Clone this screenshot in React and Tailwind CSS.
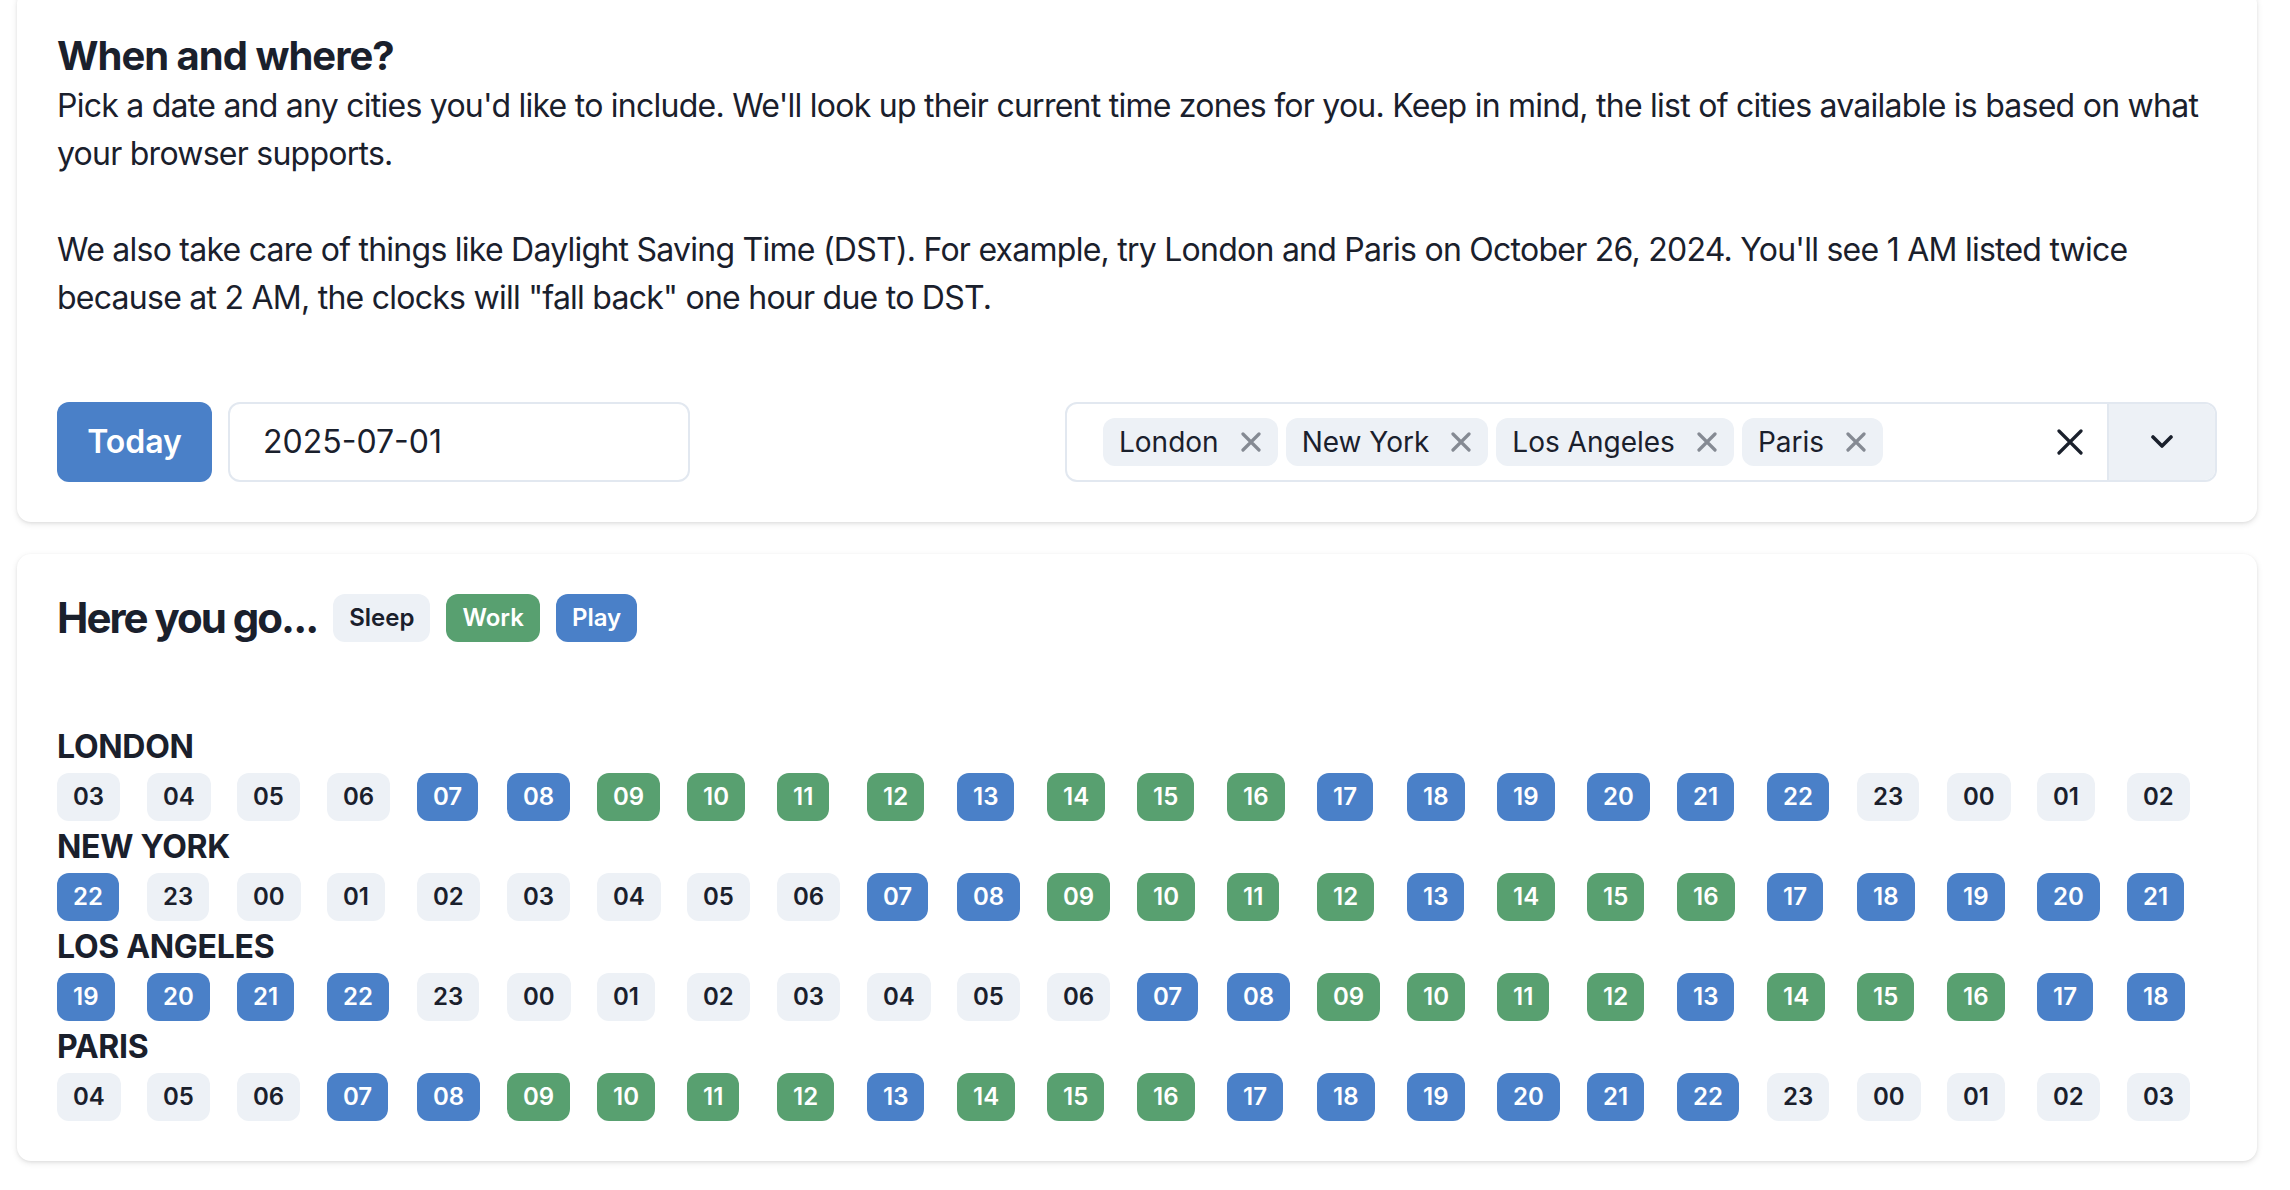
import React from 'react';

const cities = [
  { name: 'London', start: 3 },
  { name: 'New York', start: 22 },
  { name: 'Los Angeles', start: 19 },
  { name: 'Paris', start: 4 },
];

const kindOf = (h) => {
  if (h >= 23 || h <= 6) return 'sleep';
  if ((h >= 9 && h <= 12) || (h >= 14 && h <= 16)) return 'work';
  return 'play';
};

const badgeClass = {
  sleep: 'bg-[#edf1f6] text-[#1a202c]',
  work: 'bg-[#58a070] text-white',
  play: 'bg-[#4a80c8] text-white',
};

const TagX = () => (
  <svg width="20" height="20" viewBox="0 0 20 20" className="shrink-0">
    <path d="M2 2 L18 18 M18 2 L2 18" stroke="#858a93" strokeWidth="3.2" strokeLinecap="round" fill="none" />
  </svg>
);

const App = () => {
  return (
    <div className="min-h-screen bg-white pl-[17px] pr-[33px] pb-[32px] font-[Inter,'Noto_Sans',sans-serif] text-[#1a202c]">
      <div className="-mt-[10px] rounded-[14px] bg-white p-[40px] shadow-[0_2px_6px_rgba(0,0,0,0.1),0_1px_3px_rgba(0,0,0,0.06)]">
        <h2 className="text-[40px] font-bold leading-[52px] tracking-[-1px]">When and where?</h2>
        <p className="text-[32px] leading-[48px] tracking-[-0.75px]">
          Pick a date and any cities you'd like to include. We'll look up their current time zones for you. Keep in mind, the list of cities available is based on what your browser supports.
        </p>
        <p className="mt-[48px] text-[32px] leading-[48px] tracking-[-0.75px]">
          We also take care of things like Daylight Saving Time (DST). For example, try London and Paris on October 26, 2024. You'll see 1 AM listed twice because at 2 AM, the clocks will "fall back" one hour due to DST.
        </p>

        <div className="mt-[80px] flex items-center justify-between">
          <div className="flex items-center gap-[16px]">
            <button className="h-[80px] w-[155px] rounded-[12px] bg-[#4a80c8] text-[32px] font-semibold text-white">
              Today
            </button>
            <div className="flex h-[80px] w-[462px] items-center rounded-[12px] border-2 border-[#e2e8f0] pl-[33px] text-[32px]">
              2025-07-01
            </div>
          </div>

          <div className="flex h-[80px] w-[1152px] overflow-hidden rounded-[12px] border-2 border-[#e2e8f0]">
            <div className="flex flex-1 items-center gap-[8px] pl-[36px]">
              {cities.map((c) => (
                <div key={c.name} className="flex h-[48px] items-center gap-[22px] rounded-[12px] bg-[#edf1f6] pl-[16px] pr-[17px] text-[28px]">
                  <span>{c.name}</span>
                  <TagX />
                </div>
              ))}
            </div>
            <div className="flex w-[64px] items-center justify-start pl-[14px]">
              <svg width="26" height="26" viewBox="0 0 26 26">
                <path d="M2 2 L24 24 M24 2 L2 24" stroke="#1a202c" strokeWidth="3.2" strokeLinecap="round" fill="none" />
              </svg>
            </div>
            <div className="flex w-[108px] items-center justify-center border-l-2 border-[#e2e8f0] bg-[#edf1f6]">
              <svg width="22" height="14" viewBox="0 0 22 14">
                <path d="M2 2 L11 11 L20 2" stroke="#1a202c" strokeWidth="3.6" strokeLinecap="round" strokeLinejoin="round" fill="none" />
              </svg>
            </div>
          </div>
        </div>
      </div>

      <div className="mt-[32px] rounded-[14px] bg-white p-[40px] shadow-[0_2px_6px_rgba(0,0,0,0.1),0_1px_3px_rgba(0,0,0,0.06)]">
        <div className="flex h-[48px] items-center gap-[16px]">
          <h2 className="text-[42px] font-bold leading-[48px] tracking-[-2px]">Here you go...</h2>
          <span className="flex h-[48px] items-center rounded-[12px] bg-[#edf1f6] px-[16px] text-[24px] font-semibold text-[#1a202c]">Sleep</span>
          <span className="flex h-[48px] items-center rounded-[12px] bg-[#58a070] px-[16px] text-[24px] font-semibold text-white">Work</span>
          <span className="flex h-[48px] items-center rounded-[12px] bg-[#4a80c8] px-[16px] text-[24px] font-semibold text-white">Play</span>
        </div>

        <div className="mt-[79px]">
          {cities.map((c) => (
            <div key={c.name}>
              <h3 className="text-[32px] font-bold uppercase leading-[52px] tracking-[-0.3px]">{c.name}</h3>
              <div className="grid grid-cols-[repeat(24,minmax(0,1fr))]">
                {Array.from({ length: 24 }, (_, i) => {
                  const h = (c.start + i) % 24;
                  return (
                    <div key={i}>
                      <span className={`inline-flex h-[48px] items-center rounded-[12px] px-[16px] text-[24px] font-semibold ${badgeClass[kindOf(h)]}`}>
                        {String(h).padStart(2, '0')}
                      </span>
                    </div>
                  );
                })}
              </div>
            </div>
          ))}
        </div>
      </div>
    </div>
  );
};

export default App;
